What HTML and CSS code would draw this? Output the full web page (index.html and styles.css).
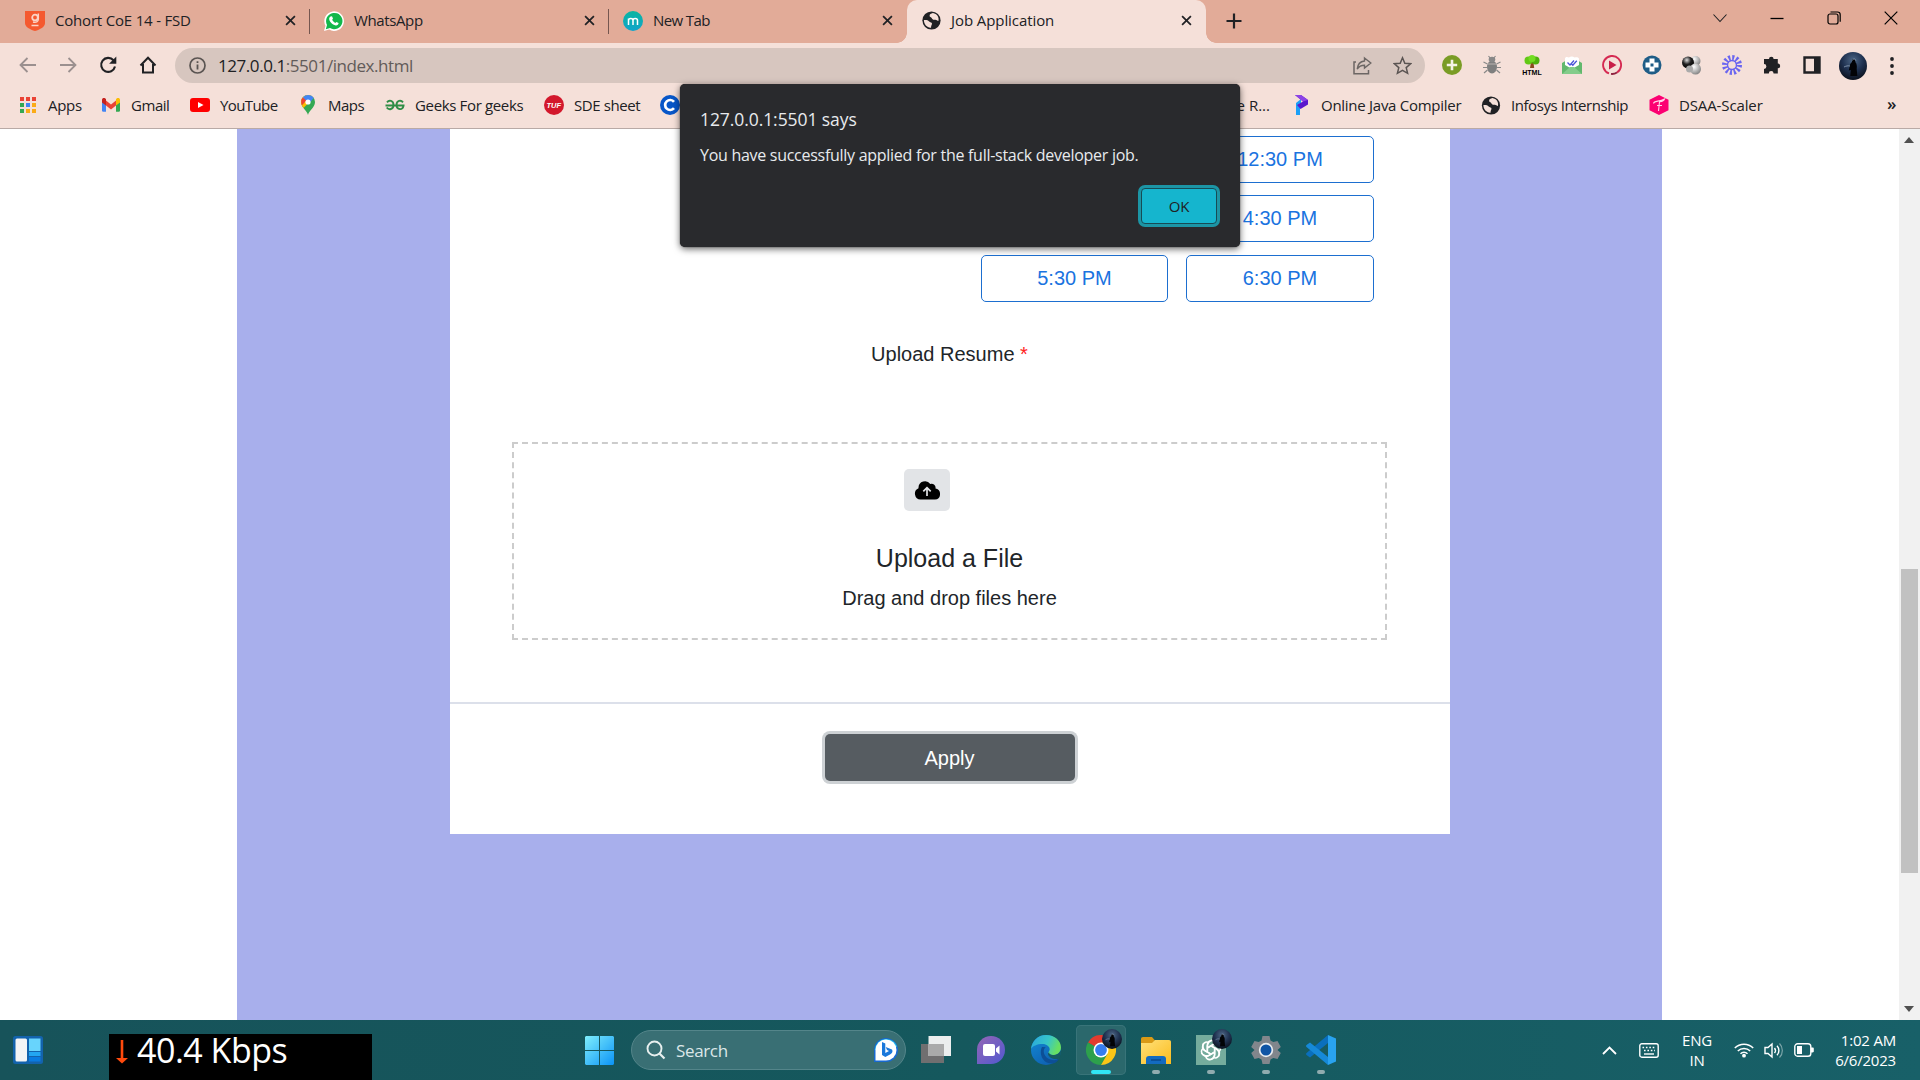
FILE: index.html
```html
<!DOCTYPE html>
<html lang="en">
<head>
<meta charset="utf-8">
<title>Job Application</title>
<link rel="stylesheet" href="styles.css">
</head>
<body>
<svg class="defs" width="0" height="0" aria-hidden="true">
  <defs>
    <symbol id="globe" viewBox="0 0 20 20"><circle cx="10" cy="10" r="9.6" fill="#202124"/><path d="M2 9.5c2.500-.2 4.200 0 5.500 1.500 1 1.200 3 .6 3 2.200 0 1.500-1 1.800-1 4.300-4 .3-7.500-3.200-7.500-8z" fill="#f5e0d9"/><path d="M11.500 2.200c-2 .8-3.700 1.300-3.500 3 .1 1.200 1.700 1 2.200 2.200.5 1.300 1.800 2.200 3.300 1.800 1.500-.4 2.300.8 3.800 1.400C18.300 6.500 15.800 3 11.500 2.200z" fill="#f5e0d9"/></symbol>
    <symbol id="close" viewBox="0 0 12 12"><path d="M1.200 1.200l9.600 9.600M10.800 1.200l-9.600 9.600" stroke="#202124" stroke-width="1.900"/></symbol>
    <symbol id="avatar" viewBox="0 0 28 28"><circle cx="14" cy="14" r="14" fill="url(#night)"/><path d="M14.500 7c1.800 0 2.200 1.500 1.800 3 1.500 1.500 1.800 4 1.400 7l.6 7h-7l.5-6-2 .5 1-5c.4-2 1.400-3 2.300-3.500C12.800 8.500 13 7 14.500 7z" fill="#020306"/><path d="M13.500 8.500c.5-2 3-2 3.300.2M5 15c2-1 4-1.500 6-1" stroke="#9db2c9" stroke-width=".7" fill="none"/></symbol>
    <radialGradient id="night" cx=".5" cy=".3" r=".75"><stop offset="0" stop-color="#4d6786"/><stop offset=".5" stop-color="#1f3150"/><stop offset="1" stop-color="#080c15"/></radialGradient>
    <linearGradient id="win" x1="0" y1="0" x2="1" y2="1"><stop stop-color="#7feefc"/><stop offset="1" stop-color="#0b93f6"/></linearGradient>
    <linearGradient id="teal" x1="0" y1="0" x2="0" y2="1"><stop stop-color="#0ab5a0"/><stop offset="1" stop-color="#10a4cb"/></linearGradient>
    <linearGradient id="chat" x1="0" y1="0" x2="1" y2="1"><stop stop-color="#9566b5"/><stop offset="1" stop-color="#5058d0"/></linearGradient>
    <linearGradient id="edgeA" x1="0" y1="0" x2="1" y2=".3"><stop stop-color="#29a5df"/><stop offset=".6" stop-color="#37c6c8"/><stop offset="1" stop-color="#67df62"/></linearGradient>
    <linearGradient id="edgeB" x1="0" y1="0" x2=".7" y2="1"><stop stop-color="#138bd5"/><stop offset="1" stop-color="#0e5fb0"/></linearGradient>
    <linearGradient id="folder" x1="0" y1="0" x2="1" y2="1"><stop stop-color="#ffe17a"/><stop offset="1" stop-color="#fbbc1d"/></linearGradient>
    <radialGradient id="ballDark" cx=".4" cy=".3" r=".7"><stop stop-color="#ddd"/><stop offset=".5" stop-color="#222"/><stop offset="1" stop-color="#000"/></radialGradient>
    <radialGradient id="ballLight" cx=".35" cy=".3" r=".8"><stop stop-color="#fff"/><stop offset="1" stop-color="#777"/></radialGradient>
  </defs>
</svg>

<div class="screen">
  <header class="tabstrip">
    <div class="tab">
      <svg class="tab-icon" width="20" height="20" viewBox="0 0 20 20"><path d="M0 0h20v12c0 4-5 6.500-10 8-5-1.500-10-4-10-8z" fill="#f5592f"/><circle cx="10" cy="6.500" r="2.800" fill="none" stroke="#fbd3c6" stroke-width="1.800"/><path d="M13.300 2.500v5.500c0 3-2.200 3.600-5.300 3M6.500 14.500h7" fill="none" stroke="#fbd3c6" stroke-width="1.500"/></svg>
      <span class="tab-title fit-cohort">Cohort CoE 14 - FSD</span>
      <svg width="11" height="11"><use href="#close"/></svg>
    </div>
    <div class="tab">
      <svg class="tab-icon" width="20" height="20" viewBox="0 0 20 20"><path d="M0 20l1.500-5.200A9.800 9.800 0 1 1 5.200 18.600z" fill="#fff"/><path d="M1.800 18.200l1.200-4.300a8.200 8.200 0 1 1 3 3.200z" fill="#12b84b"/><path d="M6.500 5.500l1.500-.3 1 2.400-.8 1.200c.7 1.500 1.600 2.400 3.100 3.100l1-1 2.300 1.100c0 1.800-1.600 2.600-2.900 2.400C8.200 13.800 5 10.200 5.200 7.800c0-1 .5-1.800 1.300-2.300z" fill="#fff"/></svg>
      <span class="tab-title fit-whatsapp">WhatsApp</span>
      <svg width="11" height="11"><use href="#close"/></svg>
    </div>
    <div class="tab tab-last">
      <svg class="tab-icon" width="20" height="20" viewBox="0 0 20 20"><circle cx="10" cy="10" r="10" fill="url(#teal)"/><path d="M5.500 14V7.500M5.500 9.500c0-2.700 4.500-2.700 4.500 0V14M10 9.500c0-2.700 4.500-2.700 4.500 0V14" fill="none" stroke="#fff" stroke-width="1.500"/></svg>
      <span class="tab-title fit-newtab">New Tab</span>
      <svg width="11" height="11"><use href="#close"/></svg>
    </div>
    <div class="tab tab-active">
      <svg class="tab-icon" width="19" height="19"><use href="#globe"/></svg>
      <span class="tab-title fit-job">Job Application</span>
      <svg width="11" height="11"><use href="#close"/></svg>
    </div>
    <svg class="new-tab" width="16" height="16" viewBox="0 0 16 16"><path d="M8 .5v15M.5 8h15" stroke="#202124" stroke-width="2.200"/></svg>
    <div class="window-controls">
      <svg width="14" height="14" viewBox="0 0 14 14"><path d="M.5 3.500L7 10.500l6.500-7" fill="none" stroke="#202124" stroke-width="1.100"/></svg>
      <svg width="14" height="14" viewBox="0 0 14 14"><path d="M.5 7.500h13" stroke="#000" stroke-width="1.300"/></svg>
      <svg width="14" height="14" viewBox="0 0 14 14"><rect x="1" y="3" width="10" height="10" rx="2" fill="none" stroke="#000" stroke-width="1.200"/><path d="M3.500 1h7c1.600 0 2.700 1 2.700 2.700v7" fill="none" stroke="#000" stroke-width="1.200"/></svg>
      <svg width="14" height="14" viewBox="0 0 14 14"><path d="M.7.700l12.600 12.600M13.300.700L.7 13.300" stroke="#000" stroke-width="1.200"/></svg>
    </div>
  </header>

  <nav class="toolbar">
    <div class="nav-buttons">
      <svg width="20" height="20" viewBox="0 0 20 20"><path d="M18 10H3M9.500 3L2.500 10l7 7" fill="none" stroke="#9b908f" stroke-width="1.800"/></svg>
      <svg width="20" height="20" viewBox="0 0 20 20"><path d="M2 10h15M10.500 3l7 7-7 7" fill="none" stroke="#9b908f" stroke-width="1.800"/></svg>
      <svg width="20" height="20" viewBox="0 0 20 20"><path d="M15.500 5.300A7 7 0 1 0 17 11.500" fill="none" stroke="#202124" stroke-width="2.100"/><path d="M18.300 1.500v7.200h-7.200z" fill="#202124"/></svg>
      <svg width="20" height="20" viewBox="0 0 20 20"><path d="M5 9v8.500h10V9M2.500 10.500L10 2.800l7.500 7.700" fill="none" stroke="#202124" stroke-width="2"/></svg>
    </div>
    <div class="omnibox">
      <svg width="17" height="17" viewBox="0 0 17 17"><circle cx="8.500" cy="8.500" r="7.500" fill="none" stroke="#5a5452" stroke-width="1.700"/><path d="M8.500 7.500v5M8.500 4.300v1.800" stroke="#5a5452" stroke-width="1.800"/></svg>
      <span class="url"><b>127.0.0.1</b>:5501/index.html</span>
      <svg class="share" width="19" height="19" viewBox="0 0 19 19"><path d="M3 6H1v11.800h14.500V14" fill="none" stroke="#6c6664" stroke-width="1.500"/><path d="M11.500 2l6.300 5-6.300 5V9.200C8 9.200 6 10.300 4.200 13c.4-4.500 3-7.500 7.300-8z" fill="none" stroke="#6c6664" stroke-width="1.400"/></svg>
      <svg width="19" height="19" viewBox="0 0 19 19"><path d="M9.500 1.800l2.300 5.400 5.900.5-4.500 3.900 1.400 5.700-5.100-3-5.100 3 1.400-5.700L1.300 7.700l5.900-.5z" fill="none" stroke="#5a5452" stroke-width="1.500"/></svg>
    </div>
    <div class="extensions">
      <svg width="20" height="20" viewBox="0 0 20 20"><circle cx="10" cy="10" r="10" fill="#7a9c25"/><path d="M10 4.800v10.400M4.800 10h10.400" stroke="#f5f3e6" stroke-width="2.600"/></svg>
      <svg width="20" height="20" viewBox="0 0 20 20"><ellipse cx="10" cy="12" rx="5" ry="6.500" fill="#7f7f7f"/><ellipse cx="10" cy="4.500" rx="3.300" ry="2.800" fill="#888"/><path d="M1.500 7l4 2M18.500 7l-4 2M1 12.500h4M19 12.500h-4M2 18l3.500-3M18 18l-3.500-3M6.500 1l2 2.500M13.500 1l-2 2.500" stroke="#888" stroke-width="1.200"/><path d="M5.500 9h9" stroke="#c9c0bd" stroke-width=".8"/></svg>
      <svg width="20" height="20" viewBox="0 0 20 20"><path d="M9 7h2.400l.8 6H8z" fill="#8a4b1d"/><circle cx="6.500" cy="5.500" r="4" fill="#63c816"/><circle cx="13.500" cy="5.500" r="4" fill="#4eb10d"/><circle cx="10" cy="3.500" r="3.500" fill="#72dc22"/><text x="10" y="19.500" text-anchor="middle" class="html-tag">HTML</text></svg>
      <svg width="20" height="20" viewBox="0 0 20 20"><path d="M0 8l10-6 10 6v11H0z" fill="#62b86d"/><path d="M3 3.500C3 2 5 1.500 7 2.500c1.500-1.500 4-1.500 5.500 0 2-.8 4.500-.3 4.500 1.500v6l-7 4-7-4z" fill="#fff"/><path d="M0 19l8-7h4l8 7z" fill="#83cc8a"/><path d="M5.500 7.500l2.500 2.500 4-4.500M9.500 9l1.300 1.200 4-4.500" fill="none" stroke="#4c54d8" stroke-width="1.300"/></svg>
      <svg width="20" height="20" viewBox="0 0 20 20"><path d="M7 18.400A9 9 0 1 1 15 17.500" fill="none" stroke="#d52a52" stroke-width="1.900"/><path d="M15 17.500A9 9 0 0 1 9 18.900" fill="none" stroke="#8e2340" stroke-width="1.900"/><path d="M7 5.500l7.500 4.500L7 14.500z" fill="#c81f49"/></svg>
      <svg width="20" height="20" viewBox="0 0 20 20"><circle cx="10" cy="10" r="9.500" fill="#1f5d87"/><path d="M7.500 3.500h5v4h4v5h-4v4h-5v-4h-4v-5h4z" fill="#fff"/><path d="M8.500 8.500h3v3h-3z" fill="#1f5d87"/></svg>
      <svg width="20" height="20" viewBox="0 0 20 20"><circle cx="13.500" cy="6" r="5" fill="url(#ballLight)"/><circle cx="6" cy="7.500" r="6" fill="url(#ballDark)"/><circle cx="13.500" cy="14" r="5.500" fill="url(#ballLight)"/><circle cx="7.500" cy="14" r="3.500" fill="#aaa"/></svg>
      <svg width="20" height="20" viewBox="0 0 20 20"><circle cx="10" cy="10" r="7" fill="none" stroke="#6a65f0" stroke-width="6" stroke-dasharray="1.900 1.765"/><circle cx="10" cy="10" r="4.500" fill="none" stroke="#6a65f0" stroke-width="1.400"/></svg>
      <svg width="20" height="20" viewBox="0 0 20 20"><path d="M7 4a2.300 2.300 0 0 1 4.600 0h4.200v4.500a2.400 2.400 0 0 1 0 4.800V18.500h-4.200a2.400 2.400 0 0 0-4.800 0H2v-4.600a2.400 2.400 0 0 0 0-4.800V4z" fill="#202124"/></svg>
      <svg width="20" height="20" viewBox="0 0 20 20"><path d="M2.500 2.500h15v15h-15z" fill="none" stroke="#202124" stroke-width="2.400"/><path d="M12 2h6v16h-6z" fill="#202124"/></svg>
    </div>
    <svg class="profile" width="28" height="28"><use href="#avatar"/></svg>
    <svg class="menu-dots" width="4" height="18" viewBox="0 0 4 18"><circle cx="2" cy="2" r="1.900"/><circle cx="2" cy="9" r="1.900"/><circle cx="2" cy="16" r="1.900"/></svg>
  </nav>

  <nav class="bookmarks">
    <div class="bookmark"><svg width="20" height="20" viewBox="0 0 20 20"><path d="M2 2h4v4H2zM8 2h4v4H8zM14 2h4v4h-4z" fill="#ea4335"/><path d="M2 8h4v4H2z" fill="#34a853"/><path d="M8 8h4v4H8z" fill="#4285f4"/><path d="M14 8h4v4h-4zM8 14h4v4H8zM14 14h4v4h-4z" fill="#fbab17"/><path d="M2 14h4v4H2z" fill="#34a853"/></svg><span class="fit-apps">Apps</span></div>
    <div class="bookmark"><svg width="20" height="20" viewBox="0 0 20 20"><path d="M1 5v10.500c0 .8.500 1.200 1.200 1.200H5V8z" fill="#4285f4"/><path d="M19 5v10.500c0 .8-.5 1.200-1.200 1.200H15V8z" fill="#34a853"/><path d="M5 5.500l5 4 5-4v5l-5 4-5-4z" fill="#ea4335"/><path d="M1 5c0-2 2-2.500 3.300-1.500L5 4v6.500L1 7.500z" fill="#c5221f"/><path d="M19 5c0-2-2-2.500-3.300-1.500L15 4v6.500l4-3z" fill="#fbbc04"/></svg><span class="fit-gmail">Gmail</span></div>
    <div class="bookmark"><svg width="20" height="20" viewBox="0 0 20 20"><rect y="3" width="20" height="14" rx="3" fill="#f00"/><path d="M8 7l5.500 3L8 13z" fill="#fff"/></svg><span class="fit-youtube">YouTube</span></div>
    <div class="bookmark"><svg width="20" height="20" viewBox="0 0 20 20"><path d="M10 20c-.7-4-7-7.500-7-13a7 7 0 0 1 14 0c0 5.500-6.300 9-7 13z" fill="#34a853"/><path d="M5 2.200A7 7 0 0 1 15.500 2.700L5.500 13C4 11 3 9.300 3 7c0-1.900.7-3.600 2-4.800z" fill="#fbbc04"/><path d="M5 2.200A7 7 0 0 1 15.800 3L10 9.500z" fill="#4285f4"/><path d="M4.800 2.400l3.500 3L4 10.300C2.600 7.500 3 4.200 4.800 2.400z" fill="#ea4335"/><circle cx="10" cy="7" r="2.600" fill="#fff"/></svg><span class="fit-maps">Maps</span></div>
    <div class="bookmark"><svg width="20" height="20" viewBox="0 0 20 20"><path d="M.5 10.500h19M2 7.300c2-2.500 6.500-2 6.500 2.700s-4.700 5.200-6.800 2.500M18 7.300c-2-2.500-6.500-2-6.500 2.700s6.800 6 6.800.5" fill="none" stroke="#2f8d46" stroke-width="1.900"/></svg><span class="fit-geeks">Geeks For geeks</span></div>
    <div class="bookmark"><svg width="20" height="20" viewBox="0 0 20 20"><circle cx="10" cy="10" r="10" fill="#d3182c"/><text x="9.800" y="12.500" text-anchor="middle" class="tuf">TUF</text></svg><span class="fit-sde">SDE sheet</span></div>
    <div class="bookmark bookmark-long"><svg width="20" height="20" viewBox="0 0 20 20"><circle cx="10" cy="10" r="10" fill="#0756c8"/><path d="M14 6.800a5 5 0 1 0 0 6.400" fill="none" stroke="#fff" stroke-width="2.700"/></svg><span class="fit-er">e R...</span></div>
    <div class="bookmark"><svg width="20" height="20" viewBox="0 0 20 20"><path d="M5 8l5-4v6l-1 1v9H5z" fill="#1ba0f7"/><path d="M4 0h6l7 5v4.500L9.500 14 6 10l6-3.500z" fill="#5a18cd"/><path d="M4 0h6l7 5-5 1.500z" fill="#8c43e6"/></svg><span class="fit-java">Online Java Compiler</span></div>
    <div class="bookmark"><svg width="20" height="19"><use href="#globe"/></svg><span class="fit-infosys">Infosys Internship</span></div>
    <div class="bookmark"><svg width="20" height="20" viewBox="0 0 20 20"><path d="M10 0l9.500 4.800v10.400L10 20 .5 15.200V4.800z" fill="#fc0072"/><path d="M4.500 8.500c.5-3 5.500-1.500 11-4.500-1 2.500-3 2.500-5 2.800L9.500 16M8 10.500h5" fill="none" stroke="#ffd4e7" stroke-width="1.100"/></svg><span class="fit-dsaa">DSAA-Scaler</span></div>
    <span class="more">»</span>
  </nav>

  <main class="viewport">
    <div class="page">
      <section class="card">
        <div class="slots">
          <button class="slot slot-right">12:30 PM</button>
          <button class="slot slot-right">4:30 PM</button>
          <button class="slot">5:30 PM</button>
          <button class="slot">6:30 PM</button>
        </div>
        <p class="field-label">Upload Resume <span class="required">*</span></p>
        <div class="dropzone">
          <button class="upload-button"><svg width="26" height="20" viewBox="0 0 26 20"><path d="M21.500 8.600A4 4 0 0 0 16.300 4 6.500 6.500 0 0 0 4.500 7.500v.7A5.900 5.900 0 0 0 6.500 19.500H21a5.500 5.500 0 0 0 .5-10.900z"/><path d="M13 16V8.500M9.300 11.300L13 7.600l3.700 3.700" fill="none" stroke="#e2e4e7" stroke-width="1.700"/></svg></button>
          <h2>Upload a File</h2>
          <p>Drag and drop files here</p>
        </div>
        <div class="card-footer"><button class="apply">Apply</button></div>
      </section>
    </div>
    <aside class="scrollbar">
      <svg width="10" height="6" viewBox="0 0 10 6"><path d="M5 0l5 6H0z"/></svg>
      <div class="thumb"></div>
      <svg width="10" height="6" viewBox="0 0 10 6"><path d="M0 0h10L5 6z"/></svg>
    </aside>
  </main>

  <footer class="taskbar">
    <svg class="widgets" width="30" height="28" viewBox="0 0 30 28"><rect width="30" height="28" rx="2.500" fill="#1363ad"/><rect x="2.500" y="2.500" width="11.500" height="23" rx="1.500" fill="#f4f5f6"/><path d="M16 2.500h11.500V15H16z" fill="#68d4fc"/><path d="M16 16h11.500v4H16z" fill="#23a6f2"/><path d="M16 21h11.500v4.500H16z" fill="#0a7be0"/></svg>
    <div class="netspeed">
      <svg width="12" height="24" viewBox="0 0 12 24"><path d="M4.700 0h2.600v18H12l-6 5.500L0 18h4.700z" fill="#ff4a0d"/></svg>
      <span>40.4 Kbps</span>
    </div>
    <svg class="start" width="29" height="29" viewBox="0 0 29 29"><path d="M1 0h13v14H0V1zM15 0h13l1 1v13H15zM0 15h14v14H1l-1-1zM15 15h14v13l-1 1H15z" fill="url(#win)"/></svg>
    <div class="search">
      <svg width="20" height="20" viewBox="0 0 20 20"><circle cx="8.500" cy="8.500" r="7" fill="none" stroke="#e8efef" stroke-width="1.900"/><path d="M13.500 13.500l5 5" stroke="#e8efef" stroke-width="2.200"/></svg>
      <span>Search</span>
      <svg width="26" height="26" viewBox="0 0 26 26"><path d="M1 25V13A12 12 0 1 1 13 25z" fill="#1769d2"/><path d="M3 13a10.300 10.300 0 0 1 20-3" fill="none" stroke="#27bee8" stroke-width="2.500"/><path d="M2.500 23.500V13A10.500 10.500 0 1 1 13 23.500z" fill="#fff"/><path d="M9 5l3.300 1.500v9.500L16 14l-2-1-1.300-3L19 12.500c1.500 3-1 4.500-2.500 5.300L12.300 20 9 18z" fill="#1a78db"/></svg>
    </div>
    <div class="pinned">
      <div class="app"><svg width="30" height="30" viewBox="0 0 30 30"><path d="M0 9h23v19H0z" fill="#706f70"/><path d="M7.500 1H30v20H7.500z" fill="#eceeee"/><path d="M7.500 9H23v12H7.500z" fill="#aaa"/></svg></div>
      <div class="app"><svg width="30" height="30" viewBox="0 0 30 30"><path d="M1 29V15A14 14 0 1 1 15 29H1z" fill="url(#chat)"/><rect x="7" y="9" width="12" height="12" rx="2" fill="#fff"/><path d="M20 13.500l3.500-3v9l-3.500-3z" fill="#fff"/></svg></div>
      <div class="app"><svg width="30" height="30" viewBox="0 0 30 30"><circle cx="15" cy="15" r="15" fill="url(#edgeB)"/><path d="M0 14C1 6 7 0 15 0c9 0 15 6 15 12.500 0 5-4 7.500-7.500 7.500-3 0-5-1-5-2.500 0-1 1.200-1.600 1.200-3.300 0-2.500-3-5.200-7.200-5.200C6 9 1.500 11 0 14z" fill="url(#edgeA)"/><path d="M11 12c-3 5-.5 16.500 10 16.500 3 0 5.500-2 7-4.500-3 1.500-7 1.500-10 0-4-2-6-6-5-9.500.3-1 1-1.800 1.800-2.200z" fill="#0d4f96"/><path d="M18.500 17.300c-1.300 1 1.500 2.700 4 2.700 3.500 0 6-1.800 7.200-4.500.5 2.500-.2 5.500-2 8.200-2 .5-6 .5-8-1-2.500-1.700-4-4.200-1.200-5.400z" fill="#155b61"/></svg></div>
      <div class="app app-active"><svg width="30" height="30" viewBox="0 0 30 30"><path d="M15 15L2 7.500A15 15 0 0 1 28 7.500z" fill="#e33b2e"/><path d="M15 15L2 7.500A15 15 0 0 0 15 30l6.500-11.200z" fill="#2da04c"/><path d="M15 15v-7.500h13A15 15 0 0 1 15 30l6.500-11.200z" fill="#fbc617"/><circle cx="15" cy="15" r="7.500" fill="#fff"/><circle cx="15" cy="15" r="5.900" fill="#367df0"/></svg><svg class="badge" width="20" height="20" viewBox="0 0 28 28"><use href="#avatar" width="28" height="28"/></svg><i class="running running-wide"></i></div>
      <div class="app"><svg width="30" height="30" viewBox="0 0 30 30"><path d="M0 4c0-1.200.6-2 2-2h9l3 3.500V12H0z" fill="#d99a16"/><path d="M0 8h11l3-3h14c1.300 0 2 .8 2 2v22H0z" fill="url(#folder)"/><path d="M5 29v-5c0-2 1-3 3-3h14c2 0 3 1 3 3v5z" fill="#136bc0"/><path d="M10 25h10" stroke="#0b4f96" stroke-width="1.800"/></svg><i class="running"></i></div>
      <div class="app"><svg width="30" height="30" viewBox="0 0 30 30"><path d="M0 0h30v30H0z" fill="#75ac9d"/><g fill="none" stroke="#fff" stroke-width="1.500"><path id="petal" d="M11.300 17V10.200c0-5.200 7.200-6.500 8.900-1.900M11.300 13l5.300-3.100c3.300-1.700 6.700-.3 8 2.100"/><use href="#petal" transform="rotate(60 15 15)"/><use href="#petal" transform="rotate(120 15 15)"/><use href="#petal" transform="rotate(180 15 15)"/><use href="#petal" transform="rotate(240 15 15)"/><use href="#petal" transform="rotate(300 15 15)"/></g></svg><svg class="badge" width="20" height="20" viewBox="0 0 28 28"><use href="#avatar" width="28" height="28"/></svg><i class="running"></i></div>
      <div class="app"><svg width="30" height="30" viewBox="0 0 30 30"><path d="M11.500 1h7l1 4.500 2.800 1.600L26.500 6l3.300 6-3.300 3 3.300 3-3.300 6-4.200-1.100-2.800 1.600-1 4.500h-7l-1-4.500-2.800-1.600L3.500 24 .2 18l3.300-3-3.300-3 3.300-6 4.200 1.100 2.800-1.600z" fill="#81868c"/><circle cx="15" cy="15" r="7.200" fill="#e9edf0"/><circle cx="15" cy="15" r="5.500" fill="#0f55a5"/></svg><i class="running"></i></div>
      <div class="app"><svg width="30" height="30" viewBox="0 0 30 30"><path d="M22 0l8 3.500v23L22 30z" fill="#29a3f0"/><path d="M22 0v8L4 22.500.5 20c-.6-.6-.6-1.500 0-2z" fill="#0a6fbd"/><path d="M22 30v-8L4 7.500.5 10c-.6.600-.6 1.500 0 2z" fill="#1689d8"/></svg><i class="running"></i></div>
    </div>
    <div class="tray">
      <svg class="tray-up" width="15" height="9" viewBox="0 0 15 9"><path d="M1 8l6.500-6.500L14 8" fill="none" stroke="#fff" stroke-width="1.800"/></svg>
      <svg class="tray-keys" width="20" height="15" viewBox="0 0 20 15"><rect x=".8" y=".8" width="18.400" height="13.400" rx="2" fill="none" stroke="#fff" stroke-width="1.400"/><path d="M3.500 4.500h13M5 7.500h11" stroke="#fff" stroke-width="1.600" stroke-dasharray="1.600 1.800"/><path d="M5 11h10" stroke="#fff" stroke-width="1.400"/></svg>
      <div class="lang"><span>ENG</span><span>IN</span></div>
      <svg class="tray-wifi" width="20" height="16" viewBox="0 0 20 16"><path d="M.8 6a13 13 0 0 1 18.400 0M3.800 9a8.700 8.700 0 0 1 12.400 0M6.500 11.800a5 5 0 0 1 7 0" fill="none" stroke="#fff" stroke-width="1.500"/><circle cx="10" cy="13.700" r="1.900" fill="#fff"/></svg>
      <svg class="tray-sound" width="20" height="17" viewBox="0 0 20 17"><path d="M1 5.500h3L8 2v13l-4-3.500H1z" fill="none" stroke="#fff" stroke-width="1.400"/><path d="M10.500 6a4 4 0 0 1 0 5M13 3.700a7 7 0 0 1 0 9.600" fill="none" stroke="#fff" stroke-width="1.400"/><path d="M15.500 1.500a10 10 0 0 1 0 14" fill="none" stroke="#7ba4a8" stroke-width="1.200"/></svg>
      <svg class="tray-battery" width="20" height="14" viewBox="0 0 20 14"><rect x=".8" y=".8" width="16" height="12.400" rx="2.800" fill="none" stroke="#fff" stroke-width="1.400"/><path d="M3 3h5v8H3z" fill="#fff"/><path d="M17 4.500h1.500c1 0 1.300.5 1.300 1.200v2.600c0 .7-.3 1.200-1.300 1.200H17z" fill="#fff"/></svg>
      <div class="clock"><span>1:02 AM</span><span>6/6/2023</span></div>
    </div>
  </footer>

  <div class="dialog" role="alertdialog">
    <h1>127.0.0.1:5501 says</h1>
    <p>You have successfully applied for the full-stack developer job.</p>
    <button class="ok">OK</button>
  </div>
</div>
</body>
</html>
```
FILE: styles.css
```css
* { box-sizing: border-box; }

body {
  margin: 0;
  overflow: hidden;
  font-family: "Open Sans", "Noto Sans", sans-serif;
  font-size: 15px;
  color: #202124;
}

button { font-family: inherit; margin: 0; padding: 0; }
svg { display: block; flex: none; }
.defs { position: absolute; }

.screen {
  position: relative;
  display: flex;
  flex-direction: column;
  width: 1920px;
  height: 1080px;
  overflow: hidden;
}

/* Tab strip */
.tabstrip {
  display: flex;
  height: 43px;
  padding-left: 11px;
  background: #e2ab98;
}
.tab {
  display: flex;
  align-items: center;
  width: 299px;
  padding: 0 14px 2px;
  background: linear-gradient(#75564f, #75564f) right 9px / 1px 25px no-repeat;
}
.tab-last { width: 298px; background: none; }
.tab-title { flex: 1; margin: -1px 0 0 10px; white-space: nowrap; }
.tab-active {
  position: relative;
  width: 299px;
  padding: 0 14px 2px 15px;
  background: #f5e0d9;
  border-radius: 10px 10px 0 0;
}
.tab-active::before,
.tab-active::after {
  content: "";
  position: absolute;
  bottom: 0;
  width: 10px;
  height: 10px;
}
.tab-active::before { left: -10px; background: radial-gradient(circle at 0 0, transparent 9.5px, #f5e0d9 10px); }
.tab-active::after { right: -10px; background: radial-gradient(circle at 100% 0, transparent 9.5px, #f5e0d9 10px); }
.new-tab { margin: 13px 0 0 20px; }
.window-controls {
  display: flex;
  gap: 43px;
  margin: 11px 22px 0 auto;
}

/* Letter fitting of the browser labels */
.fit-cohort { letter-spacing: -.19px; }
.fit-whatsapp { letter-spacing: -.38px; }
.fit-newtab { letter-spacing: -.6px; }
.fit-job { letter-spacing: -.08px; }
.fit-apps { letter-spacing: -.3px; }
.fit-gmail { letter-spacing: -.45px; }
.fit-youtube { letter-spacing: -.6px; }
.fit-maps { letter-spacing: -.5px; }
.fit-geeks { letter-spacing: -.35px; }
.fit-sde { letter-spacing: -.42px; }
.fit-java { letter-spacing: -.27px; }
.fit-infosys { letter-spacing: -.44px; }
.fit-dsaa { letter-spacing: -.12px; }

/* Address bar row */
.toolbar {
  display: flex;
  align-items: center;
  height: 45px;
  padding: 0 26px 0 18px;
  background: #f5e0d9;
}
.nav-buttons { display: flex; gap: 20px; width: 157px; padding-bottom: 1px; }
.omnibox {
  display: flex;
  align-items: center;
  width: 1250px;
  height: 35px;
  padding: 0 13px 1px 14px;
  background: #d7c6bf;
  border-radius: 18px;
}
.url { margin-left: 12px; font-size: 17px; letter-spacing: -.44px; color: #625b59; }
.url b { font-weight: 400; color: #202124; }
.share { margin: 0 21px 0 auto; }
.extensions { display: flex; gap: 20px; margin-left: 17px; padding-bottom: 1px; }
.profile { margin-left: 17px; }
.menu-dots { margin-left: auto; fill: #202124; }
.html-tag { font: 900 7px "Liberation Sans", sans-serif; }
.tuf { font: italic 700 7.500px "Liberation Sans", sans-serif; fill: #fff; }

/* Bookmark row */
.bookmarks {
  display: grid;
  grid-template-columns: 83px 89px 108px 87px 159px 116px 631px 190px 168px 238px auto;
  align-items: center;
  height: 41px;
  padding: 0 0 6px 18px;
  background: #f5e0d9;
  border-bottom: 1px solid #b9aaa6;
}
.bookmark { display: flex; align-items: center; gap: 10px; white-space: nowrap; }
.bookmark span { margin-top: -1px; }
.bookmark-long { justify-content: space-between; padding-right: 21px; }
.more { margin-top: -3px; font-size: 17px; font-weight: 600; line-height: 20px; }

/* Page */
.viewport { display: flex; height: 891px; background: #fff; }
.page {
  width: 1425px;
  height: 891px;
  margin-left: 237px;
  background: #a8afec;
}
.card {
  display: flex;
  flex-direction: column;
  width: 1000px;
  height: 705px;
  margin-left: 213px;
  padding-top: 7px;
  background: #fff;
  font-family: "Liberation Sans", Arial, sans-serif;
  font-size: 20px;
  line-height: 30px;
  color: #212529;
}
.slots {
  display: grid;
  grid-template-columns: 187px 188px;
  grid-template-rows: 59px 60px 47px;
  column-gap: 18px;
  align-self: flex-end;
  margin-right: 76px;
}
.slot {
  height: 47px;
  border: 1px solid #1d6fd0;
  border-radius: 5px;
  background: #fff;
  font-size: 20px;
  color: #1a73e0;
}
.slot-right { grid-column: 2; }
.field-label { margin: 37px 1px 0 0; text-align: center; }
.required { color: #f22; }
.dropzone {
  display: flex;
  flex-direction: column;
  align-items: center;
  width: 875px;
  height: 198px;
  margin: 73px 0 0 62px;
  padding-top: 25px;
  border: 2px dashed #ccc;
}
.upload-button {
  display: flex;
  align-items: center;
  justify-content: center;
  width: 46px;
  height: 42px;
  margin-right: 45px;
  padding-bottom: 1px;
  border: 0;
  border-radius: 5px;
  background: #e2e4e7;
}
.dropzone h2 { margin: 32px 0 10px; font-size: 25px; font-weight: 400; line-height: 30px; }
.dropzone p { margin: 0; }
.card-footer {
  display: flex;
  justify-content: center;
  margin-top: 62px;
  padding-top: 30px;
  border-top: 2px solid #dce0ea;
}
.apply {
  width: 250px;
  height: 47px;
  padding: 1px 1px 0 0;
  border: 0;
  border-radius: 5px;
  background: #565c61;
  box-shadow: 0 0 0 3px #cdd1d4;
  font-size: 20px;
  color: #fff;
}
.scrollbar {
  display: flex;
  flex-direction: column;
  align-items: center;
  width: 21px;
  margin-left: auto;
  padding: 8px 1px 8px 0;
  background: #f1f1f1;
  fill: #505050;
}
.thumb { width: 17px; height: 304px; margin: 426px 0 auto; background: #c1c1c1; }

/* Taskbar */
.taskbar {
  display: flex;
  height: 60px;
  background: linear-gradient(90deg, #17535a, #15585d 50%, #186068);
  color: #fff;
}
.widgets { margin: 16px 0 0 13px; }
.netspeed {
  display: flex;
  width: 263px;
  height: 46px;
  margin: 14px 0 0 66px;
  padding: 6px 0 0 7px;
  background: #000;
}
.netspeed span { margin: -10px 0 0 9px; font-size: 34px; line-height: 40px; letter-spacing: -.5px; white-space: nowrap; }
.start { margin: 16px 0 0 213px; }
.search {
  display: flex;
  align-items: center;
  width: 275px;
  height: 40px;
  margin: 10px 0 0 17px;
  padding: 0 6px 0 14px;
  border: 1px solid #54858a;
  border-radius: 20px;
  background: #396f74;
}
.search span { flex: 1; margin-left: 10px; font-size: 17px; letter-spacing: -.35px; color: #dce7e8; }
.pinned { display: flex; gap: 5px; margin: 5px 0 0 5px; }
.app { position: relative; width: 50px; height: 50px; padding: 10px; border-radius: 5px; }
.app-active { background: #2b686c; box-shadow: inset 0 0 0 1px #397479; }
.badge { position: absolute; left: 26px; top: 4px; }
.running {
  position: absolute;
  left: 21px;
  bottom: 1px;
  width: 8px;
  height: 4px;
  border-radius: 2px;
  background: #90acaf;
}
.running-wide { left: 15px; width: 20px; background: #31e5f5; }
.tray { display: flex; align-items: center; margin-left: auto; padding-right: 24px; }
.tray-keys { margin-left: 22px; }
.lang { width: 42px; margin: 0 16px 0 17px; text-align: center; }
.tray-sound { margin-left: 10px; }
.tray-battery { margin-left: 10px; }
.clock { width: 82px; text-align: right; }
.lang span, .clock span { display: block; font-size: 15px; line-height: 20px; letter-spacing: -.2px; }
.tray .lang, .tray .clock { padding-bottom: 1px; }

/* Alert */
.dialog {
  position: absolute;
  left: 680px;
  top: 84px;
  width: 560px;
  height: 163px;
  padding: 22px 20px 0;
  border-radius: 5px;
  background: #292a2d;
  box-shadow: 0 2px 7px rgba(0, 0, 0, .6), 0 0 1px #000;
  color: #e8eaed;
}
.dialog h1 { margin: 0; font-size: 17.500px; font-weight: 400; line-height: 26px; letter-spacing: -.08px; }
.dialog p { margin: 11px 0 0; font-size: 16px; line-height: 24px; letter-spacing: -.28px; white-space: nowrap; }
.ok {
  display: block;
  width: 76px;
  height: 36px;
  margin: 21px 3px 0 auto;
  border: 1px solid #174b55;
  border-radius: 4px;
  background: #15b5ce;
  box-shadow: 0 0 0 3px #1c95a5;
  font-size: 15px;
  letter-spacing: -.3px;
  color: #202124;
}
```
